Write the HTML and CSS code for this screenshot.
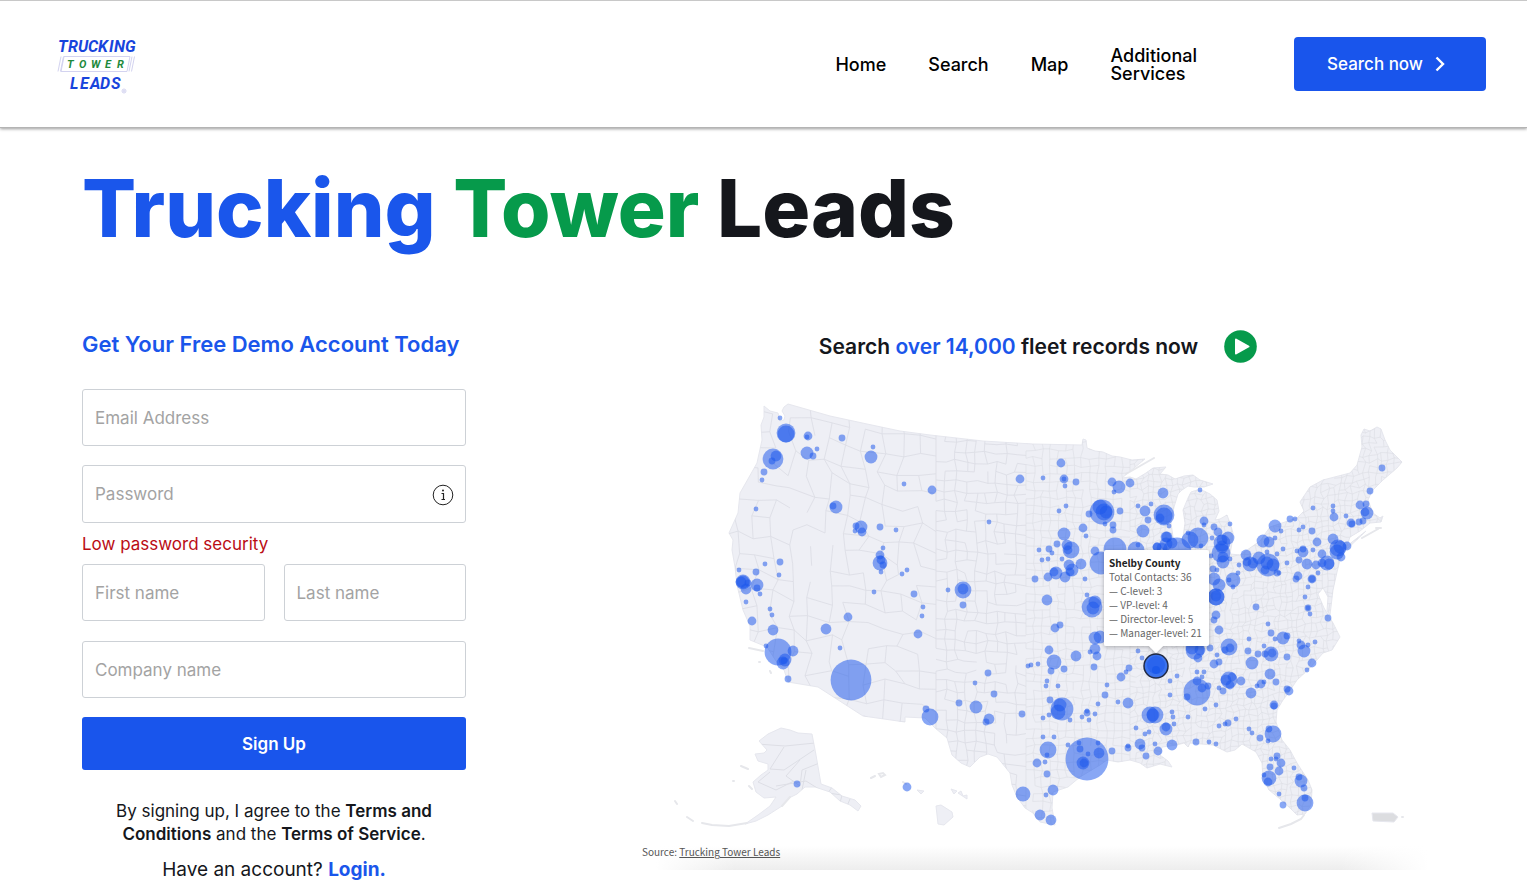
FILE: index.html
```html
<!DOCTYPE html>
<html lang="en">
<head>
<meta charset="utf-8">
<meta name="viewport" content="width=device-width, initial-scale=1">
<title>Trucking Tower Leads</title>
<link rel="stylesheet" href="styles.css">
</head>
<body>
<header class="site-header">
  <a class="logo" href="#" aria-label="Trucking Tower Leads">
    <svg width="82" height="60" viewBox="0 0 82 60">
      <g class="logo-frame">
        <path d="M7 20.500H73L70 35.500H4ZM4 20.500L1 35.500M6.500 20.500L3.500 35.500M75 20.500L72 35.500M77.500 20.500L74.500 35.500"/>
        <circle cx="67" cy="55" r="2"/><path d="M66 55h2M67 54v2"/>
      </g>
      <text class="logo-blue" x="1 11 21 31 41 52 57 68" y="16">TRUCKING</text>
      <text class="logo-green" x="10 22 34 48 60" y="32">TOWER</text>
      <text class="logo-blue" x="13 23 33 43 54" y="53">LEADS</text>
    </svg>
  </a>
  <nav class="nav">
    <a href="#">Home</a>
    <a href="#">Search</a>
    <a href="#">Map</a>
    <a href="#">Additional<br>Services</a>
  </nav>
  <button class="search-btn" type="button">Search now
    <svg width="10" height="16" viewBox="0 0 10 16"><path d="M1.500 1.500L8 8L1.500 14.500" fill="none" stroke="#fff" stroke-width="2.400"/></svg>
  </button>
</header>
<main class="page">
  <h1 class="title"><span class="blue">Trucking</span> <span class="green">Tower</span> Leads</h1>
  <div class="columns">
    <form class="signup">
      <h2 class="form-title">Get Your Free Demo Account Today</h2>
      <input class="field" type="email" placeholder="Email Address" aria-label="Email Address">
      <div class="password">
        <input class="field" type="password" placeholder="Password" aria-label="Password">
        <button class="info" type="button" aria-label="Password rules">
          <svg width="22" height="22" viewBox="0 0 22 22" fill="none" stroke="#222"><circle cx="11" cy="11" r="9.800" stroke-width="1"/><path d="M9.500 9.500H11.500V15.500M9.500 15.500H13" stroke-width="1.200"/><circle cx="11" cy="6.500" r="1" fill="#222" stroke="none"/></svg>
        </button>
      </div>
      <p class="warning">Low password security</p>
      <div class="names">
        <input class="field" type="text" placeholder="First name" aria-label="First name">
        <input class="field" type="text" placeholder="Last name" aria-label="Last name">
      </div>
      <input class="field" type="text" placeholder="Company name" aria-label="Company name">
      <button class="submit" type="submit">Sign Up</button>
      <p class="terms">By signing up, I agree to the <a href="#">Terms and Conditions</a> and the <a href="#">Terms of Service</a>.</p>
      <p class="login">Have an account? <a href="#">Login.</a></p>
    </form>
    <section class="records">
      <div class="records-head">
        <h2 class="records-title">Search <span class="blue">over 14,000</span> fleet records now</h2>
        <button class="play" type="button" aria-label="Play">
          <svg width="33" height="33" viewBox="0 0 33 33"><circle cx="16.500" cy="16.500" r="16.300" fill="#069a4b"/><path d="M12 9.500L24.500 16.500L12 23.500Z" fill="#fff" stroke="#fff" stroke-width="2" stroke-linejoin="round"/></svg>
        </button>
      </div>
      <figure class="map">
        <svg class="map-svg" viewBox="640 390 796 450" role="img" aria-label="Map of fleet contacts by county">
          <defs>
            <clipPath id="states"><use href="#usa"/></clipPath>
            <clipPath id="alaska-clip"><use href="#alaska"/></clipPath>
            <filter id="lift" x="-20%" y="-20%" width="140%" height="140%"><feDropShadow dx="0" dy="1" stdDeviation="2" flood-opacity=".3"/></filter>
          </defs>
          <g class="land">
            <path id="usa" d="M764 406L770 411L778 413L780 421L784 420L785 416L782 411L784 407L788 404L830 416L867 424L900 431L930 435L983 441L1033 444L1082 445L1083 439L1086 440L1087 448L1095 451L1103 452L1112 456L1120 457L1132 460L1145 459L1134 468L1122 478L1130 477L1136 479L1146 473L1153 468L1166 467L1160 474L1168 475L1175 479L1184 476L1193 475L1200 480L1213 484L1204 487L1194 487L1188 486L1182 490L1178 494L1174 507L1171 523L1173 537L1178 543L1183 537L1185 523L1183 510L1188 498L1191 492L1197 490L1204 491L1210 494L1217 500L1219 511L1215 520L1220 519L1227 515L1230 523L1233 533L1232 543L1230 554L1240 555L1260 541L1270 527L1297 518L1304 511L1300 502L1310 487L1323 480L1350 473L1357 465L1362 447L1361 435L1364 429L1370 431L1377 427L1381 429L1385 440L1390 450L1396 456L1402 462L1397 468L1383 480L1372 491L1368 500L1373 513L1380 518L1383 516L1381 522L1370 523L1360 531L1350 537L1347 546L1366 531L1345 551L1340 560L1337 572L1333 590L1330 615L1327 611L1328 597L1323 588L1318 594L1324 608L1333 623L1340 637L1332 650L1323 653L1310 668L1297 680L1289 692L1283 700L1277 710L1276 722L1282 740L1290 750L1297 763L1308 780L1312 790L1311 805L1305 814L1297 815L1290 808L1280 799L1269 790L1263 778L1262 763L1256 752L1242 744L1235 750L1227 752L1213 745L1190 743L1188 747L1184 743L1177 745L1162 747L1160 755L1168 761L1172 767L1160 764L1147 768L1140 763L1130 760L1118 762L1107 760L1100 765L1080 777L1068 787L1053 792L1052 808L1055 825L1040 822L1033 813L1025 808L1017 797L1012 785L1010 773L997 757L988 754L980 757L970 767L961 763L952 755L947 738L935 728L925 718L905 717L905 722L863 716L818 687L788 682L784 670L776 661L767 647L750 640L750 626L743 610L737 585L735 567L732 550L733 540L729 533L738 513L740 493L748 479L757 463L762 440L761 425L764 417Z"/>
            <path id="alaska" d="M759 741L768 734L781 728L790 730L798 733L812 734L816 755L821 784L832 788L842 796L855 800L861 806L858 811L850 805L840 801L830 792L815 787L805 787L797 794L789 798L782 806L768 815L756 821L745 824L758 815L770 806L776 797L764 798L756 792L753 782L761 775L768 770L768 764L758 761L755 754L764 753L767 750Z"/>
            <path d="M951 789L957 791L954 794ZM958 793L961 791L963 796L967 795L967 799ZM917 790L924 791L921 794ZM936 806L941 805L952 812L953 817L944 825L938 824Z"/>
            <path class="puerto" d="M1372 813L1393 813L1398 817L1394 822L1373 821Z"/>
          </g>
          <path class="islands" d="M675 801l2 3M687 817l6 4M702 823l10 2l17 1l18-3M741 766l7 3M733 781h1M749 786l3 3M871 778l4-2M879 774l4-1l2 2l-4 2zM903 782l3 2M749 648l14 3M759 662h1M770 671l1 2M1279 828l12-4l10-5l3-4M1402 817h1M782 806l8-9M1362 538l16-9M1126 474l28-16M1376 528h5"/>
          <g id="counties" class="counties" clip-path="url(#states)"></g>
          <g class="counties" clip-path="url(#alaska-clip)"><path d="M757 744l28 2l30-3M784 747l-14 22l14 1l30-20M770 772l-12 10l18 8l18-9M800 760l-14 16l14 10l2-16l20-8M806 770l-4 20M776 786l30-5l16 10M832 787l-4 6l14 2l-2 8M850 799l-3 7"/></g>
          <g id="bubbles" class="bubbles"></g>
          <circle cx="1156" cy="666" r="12" fill="#3b73ee" stroke="#222b45" stroke-width="1.500"/>
          <circle cx="1156" cy="665" r="9" fill="#1a56eb" fill-opacity=".5"/>
          <circle cx="1156" cy="670" r="4" fill="#1453ea" fill-opacity=".6"/>
          <g filter="url(#lift)"><path class="tip-box" d="M1106 550H1207Q1209 550 1209 552V644Q1209 646 1207 646H1163L1156 653L1149 646H1106Q1104 646 1104 644V552Q1104 550 1106 550Z"/></g>
          <g class="tip-text">
            <text class="tip-name" x="1109" y="567">Shelby County</text>
            <text x="1109" y="581">Total Contacts: 36</text>
            <text x="1109" y="595">— C-level: 3</text>
            <text x="1109" y="609">— VP-level: 4</text>
            <text x="1109" y="623">— Director-level: 5</text>
            <text x="1109" y="637">— Manager-level: 21</text>
          </g>
        </svg>
        <figcaption class="source">Source: <a href="#">Trucking Tower Leads</a></figcaption>
      </figure>
    </section>
  </div>
</main>
<script src="map.js"></script>
</body>
</html>
```
FILE: styles.css
```css
* { box-sizing: border-box; }
body { margin: 0; background: #fff; color: #15171c; font-family: Inter, "Liberation Sans", sans-serif; }
h1, h2, p, figure { margin: 0; }
a { color: inherit; text-decoration: none; }
button { border: 0; padding: 0; font-family: inherit; cursor: pointer; }
.blue { color: #1a56eb; }
.green { color: #069a4b; }

.site-header { display: flex; align-items: center; height: 128px; padding: 0 41px 0 57px; border-top: 1px solid #c8c8c8; border-bottom: 1px solid #b4b4b4; box-shadow: 0 1px 3px rgba(0, 0, 0, .4); }
.logo { display: flex; margin-right: auto; padding-top: 4px; }
.logo text { font-family: Roboto, sans-serif; font-style: italic; font-weight: 700; }
.logo-blue { fill: #1744dc; font-size: 16px; }
.logo-green { fill: #1d8a3c; font-size: 11px; }
.logo-frame { fill: none; stroke: #d3d3f0; stroke-width: 1; }
.nav { display: flex; align-items: center; gap: 42px; margin-right: 97px; padding-top: 2px; color: #000; font-size: 18px; font-weight: 500; line-height: 18px; }
.search-btn { display: flex; align-items: center; justify-content: center; gap: 12px; width: 192px; height: 54px; padding-right: 8px; border-radius: 4px; background: #1955ec; color: #fff; font-size: 17px; font-weight: 500; }

.page { padding: 32px 91px 0 82px; }
.title { font-size: 80px; line-height: 96px; font-weight: 800; }
.columns { display: grid; grid-template-columns: 384px 1fr; gap: 174px; padding-top: 73px; }

.signup { display: flex; flex-direction: column; }
.form-title { margin-bottom: 30px; color: #1a56eb; font-size: 22px; line-height: 30px; font-weight: 600; }
.field { width: 100%; min-width: 0; height: 57px; padding: 0 12px; border: 1px solid #cdd1d6; border-radius: 3px; background: #fff; font-family: inherit; font-size: 17px; font-weight: 400; }
.field::placeholder { color: #a3a3a3; opacity: 1; }
.password { position: relative; margin-top: 19px; }
.password .field { display: block; height: 58px; }
.info { position: absolute; top: 19px; right: 12px; display: flex; background: none; }
.warning { padding: 10px 0 9px; color: #ba0c14; font-size: 17px; line-height: 22px; }
.names { display: grid; grid-template-columns: 1fr 1fr; gap: 19px; margin-bottom: 20px; }
.submit { height: 53px; margin-top: 19px; border-radius: 3px; background: #1955ec; color: #fff; font-size: 17px; font-weight: 600; }
.terms { padding: 30px 24px 0; text-align: center; font-size: 17px; line-height: 23px; }
.terms a { font-weight: 600; }
.login { padding-top: 11px; text-align: center; font-size: 19px; line-height: 26px; }
.login a { color: #1a56eb; font-weight: 700; }

.records-head { display: flex; align-items: center; justify-content: center; gap: 26px; height: 34px; }
.records-title { padding-top: 2px; font-size: 21px; line-height: 30px; font-weight: 600; }
.play { display: flex; border-radius: 50%; background: none; }
.map { margin-top: 27px; }
.map-svg { display: block; width: 100%; height: auto; }
.land { fill: #eeeff5; stroke: #e6e7ee; stroke-width: 1; }
.puerto { fill: #dcdde0; }
.islands { fill: none; stroke: #e6e7eb; stroke-width: 2; stroke-linecap: round; }
.counties { fill: none; stroke: #dddee5; stroke-width: 1; }
.bubbles { fill: #1a56eb; fill-opacity: .52; }
.tip-box { fill: #fff; }
.tip-text { fill: #666; font-family: "Noto Sans CJK SC", "Noto Sans", sans-serif; font-size: 10px; }
.tip-name { fill: #222; font-weight: 700; }
.source { height: 30px; padding: 2px; color: #555; font-family: "Noto Sans CJK SC", "Noto Sans", sans-serif; font-size: 10px; line-height: 20px; background: linear-gradient(90deg, #fff 2%, transparent 12%, transparent 88%, #fff 99%), linear-gradient(#fff 20%, #ededed); }
.source a { text-decoration: underline; }
```
FILE: map.js
```js
var NS = "http://www.w3.org/2000/svg";

// Contacts by county: x, y, radius
var points = `780,418,2 786,433,9 786,434,8 773,459,10 776,456,5 772,461,3 808,436,4 807,437,2 842,438,3 807,453,6 813,456,3 817,449,2
873,447,2 871,457,6 764,472,3 762,480,2 756,509,2 904,484,2 836,507,6 833,506,3 861,527,6 856,526,3 862,532,4 855,531,2 880,527,3 896,530,2
883,548,2 880,555,4 880,563,7 881,560,4 883,565,3 881,572,2 902,574,2 907,570,2 739,570,2 756,572,3 765,564,2 780,562,3 779,575,2
743,582,7 743,582,6 741,582,5 746,589,5 748,583,3 757,585,6 757,588,3 760,594,2 746,602,2 770,609,2 772,615,2 752,621,4 773,630,5 826,629,5
848,617,4 874,592,2 914,594,3 923,607,2 922,616,2 932,490,4 989,522,2 1020,479,4 1043,478,2 1061,463,4 1064,479,4 1064,479,2 1065,486,2 1076,482,3
1066,506,2 1059,511,2 1112,482,4 1119,487,6 1130,483,4 1114,492,2 1163,493,5 1102,512,12 1100,507,7 1106,512,6 1104,512,8 1089,514,3 1120,511,3
1138,506,2 1145,511,5 1151,504,2 1148,520,3 1164,515,10 1164,516,8 1160,518,4 1083,528,4 1086,536,2 1113,525,3 1113,530,3 1143,531,6 1105,524,2
1064,534,6 1057,544,3 1049,549,3 1039,550,2 1052,553,2 1048,559,2 1042,560,2 1062,559,2 1071,550,8 1067,545,5 1068,550,4
1081,564,5 1072,570,6 1069,565,5 1070,572,4 1056,573,6 1065,577,5 1048,577,4 1054,572,4 1035,579,3 1085,579,2 1087,595,2
1047,600,5 1092,607,10 1095,602,6 1093,608,6 1060,625,3 1055,628,4 1115,549,11 1136,550,8 1138,545,2 1101,563,11 1095,551,4
963,590,8 963,589,5 948,590,2 963,605,3 1157,547,4 1166,537,5 1200,490,2 1204,521,4 1204,525,2 1214,527,3 1230,524,2 1218,532,4
1169,526,2 1167,537,5 1166,544,6 1157,547,4 1177,552,14 1172,543,5 1162,548,5 1190,540,8 1198,538,10 1201,546,2 1188,533,2
1212,538,2 1228,538,6 1222,543,8 1222,540,5 1221,553,9 1223,562,6 1222,547,6 1223,557,5 1211,556,2 1230,559,2 1213,569,3 1217,570,2
1214,579,6 1219,585,6 1216,597,8 1216,597,8 1216,596,5 1233,580,7 1229,580,2 1233,587,2 1238,573,2 1239,565,2
1246,555,5 1250,564,7 1247,562,4 1259,558,6 1253,563,5 1268,565,11 1267,563,6 1273,565,6 1265,570,4 1279,573,2 1277,573,3 1277,554,2 1267,552,2 1283,549,2 1287,563,2
1263,541,6 1269,542,5 1275,538,2 1275,526,6 1281,531,2 1290,519,3 1295,519,2 1299,530,2 1303,527,2 1312,531,3 1313,508,2 1333,506,2 1333,511,2 1334,517,4 1346,516,2
1351,523,4 1352,524,3 1359,522,3 1360,505,4 1366,504,3 1367,513,6 1365,512,4 1363,521,3 1370,491,3 1382,468,3
1317,542,4 1303,552,5 1303,549,3 1297,551,2 1313,550,2 1299,560,3 1307,564,5 1316,565,4 1318,573,2
1333,539,5 1338,548,8 1340,547,6 1337,552,7 1347,546,4 1341,557,4 1322,554,4 1327,563,7 1329,564,5 1322,563,4
1298,576,4 1296,579,3 1312,579,3 1312,579,4 1308,587,2 1305,597,2 1308,608,3 1308,608,2 1310,614,2 1328,618,3 1256,607,3 1268,624,2
1216,615,4 1214,620,3 1219,630,4 778,652,13 793,651,5 785,660,6 783,663,6 784,661,3 766,646,2 788,679,3 840,648,2 851,680,20 918,634,4
797,784,3 907,787,4 926,709,3 930,717,8 988,673,3 975,683,2 994,694,3 959,703,3 976,707,6 989,719,5 986,722,3 1022,714,3
1049,650,4 1054,662,7 1051,671,3 1064,669,3 1076,656,5 1028,666,2 1031,665,2 1038,664,2 1095,638,6 1100,637,6 1095,649,5 1097,656,4 1090,652,2 1094,667,3
1047,681,2 1046,686,2 1058,686,2 1050,700,3 1062,709,11 1058,712,7 1060,705,6 1070,720,2 1049,715,2 1043,718,2
1105,695,3 1107,685,2 1121,677,4 1129,668,3 1126,672,2 1128,703,5 1118,702,2 1098,704,2 1087,713,3 1087,711,2 1095,714,2 1082,717,2 1089,720,2 1138,651,2 1142,658,2
1043,737,2 1054,737,2 1048,750,8 1047,755,2 1037,763,4 1045,762,2 1047,774,3 1087,759,21 1083,763,6 1084,763,4 1080,749,3 1099,753,5 1088,754,2 1079,743,2 1098,743,2 1068,745,2 1112,751,3
1128,748,3 1128,746,2 1140,744,5 1142,748,3 1146,756,3 1136,728,2 1145,734,2 1149,732,2 1155,744,2 1158,751,4 1150,715,8 1155,715,8 1153,715,6
1023,794,7 1053,790,5 1046,795,2 1040,815,5 1051,820,5 1166,729,6 1166,727,4 1172,712,2 1173,717,2 1174,724,2 1188,717,2 1205,709,2 1216,705,2 1170,681,2 1170,695,2 1177,676,2 1172,745,5 1196,742,3 1209,742,2 1216,744,2
1197,692,13 1197,681,4 1202,688,4 1208,686,3 1187,697,3 1197,672,2 1204,672,2 1202,677,2 1195,650,9 1192,648,6 1198,658,4 1200,650,5 1210,648,3 1214,664,4 1219,662,3 1217,655,2
1229,647,8 1230,648,4 1225,650,3 1249,639,2 1248,651,3 1258,654,3 1264,646,2 1271,633,3 1283,638,6 1287,636,3 1275,639,2 1271,654,7 1272,653,4 1265,654,3 1252,663,6 1287,657,3 1304,651,6 1301,645,4 1299,641,2 1308,645,2 1315,642,2 1312,663,4 1307,670,2
1229,680,8 1226,680,5 1230,685,4 1232,677,4 1241,681,4 1223,691,3 1219,688,2 1251,693,5 1261,684,4 1264,682,2 1257,686,2 1270,674,5 1276,682,3 1289,691,4 1287,689,3 1274,705,4 1274,706,3
1228,723,3 1225,724,2 1236,719,2 1219,726,2 1249,729,2 1252,733,2 1260,738,3 1273,734,8 1269,729,3 1268,741,2 1277,756,3 1271,759,2 1276,759,2 1281,763,4 1270,767,3 1279,771,4 1269,778,7 1268,782,4 1264,775,2 1294,768,2 1301,781,6 1299,777,3 1304,788,3 1279,794,2 1283,805,3 1305,803,8 1305,798,3`;

var bubbles = document.getElementById("bubbles");
points.split(/\s+/).forEach(function (p) {
  var v = p.split(",");
  var c = document.createElementNS(NS, "circle");
  c.setAttribute("cx", v[0]);
  c.setAttribute("cy", v[1]);
  c.setAttribute("r", Number(v[2]) + .4);
  bubbles.appendChild(c);
});

// County borders: a jittered mesh per band, wide in the west, tight in the east
var seed = 7;
function rnd() { seed = (seed * 16807) % 2147483647; return seed / 2147483647; }
function mesh(x0, x1, step, jitter, skip, slope) {
  var d = "", nodes = [], i, j;
  var cols = Math.ceil((x1 - x0) / step), rows = Math.ceil(520 / step);
  for (j = 0; j <= rows; j++) {
    nodes[j] = [];
    for (i = 0; i <= cols; i++) {
      var edge = i === 0 || i === cols ? 0 : 1;
      nodes[j][i] = [x0 + i * step + (rnd() - .5) * jitter * edge, 370 + j * step + i * step * slope + (rnd() - .5) * jitter];
    }
  }
  for (j = 0; j < rows; j++) {
    for (i = 0; i < cols; i++) {
      var a = nodes[j][i], b = nodes[j][i + 1], c = nodes[j + 1][i];
      if (rnd() > skip) d += "M" + a + "L" + b;
      if (rnd() > skip) d += "M" + a + "L" + c;
    }
  }
  var path = document.createElementNS(NS, "path");
  path.setAttribute("d", d);
  path.setAttribute("stroke-opacity", step < 9 ? .65 : .9);
  document.getElementById("counties").appendChild(path);
}
mesh(720, 936, 18, 10, .28, .16);
mesh(936, 1026, 10, 4, .2, .05);
mesh(1026, 1130, 8, 3, .12, 0);
mesh(1130, 1410, 6, 4, .1, -.12);
```
